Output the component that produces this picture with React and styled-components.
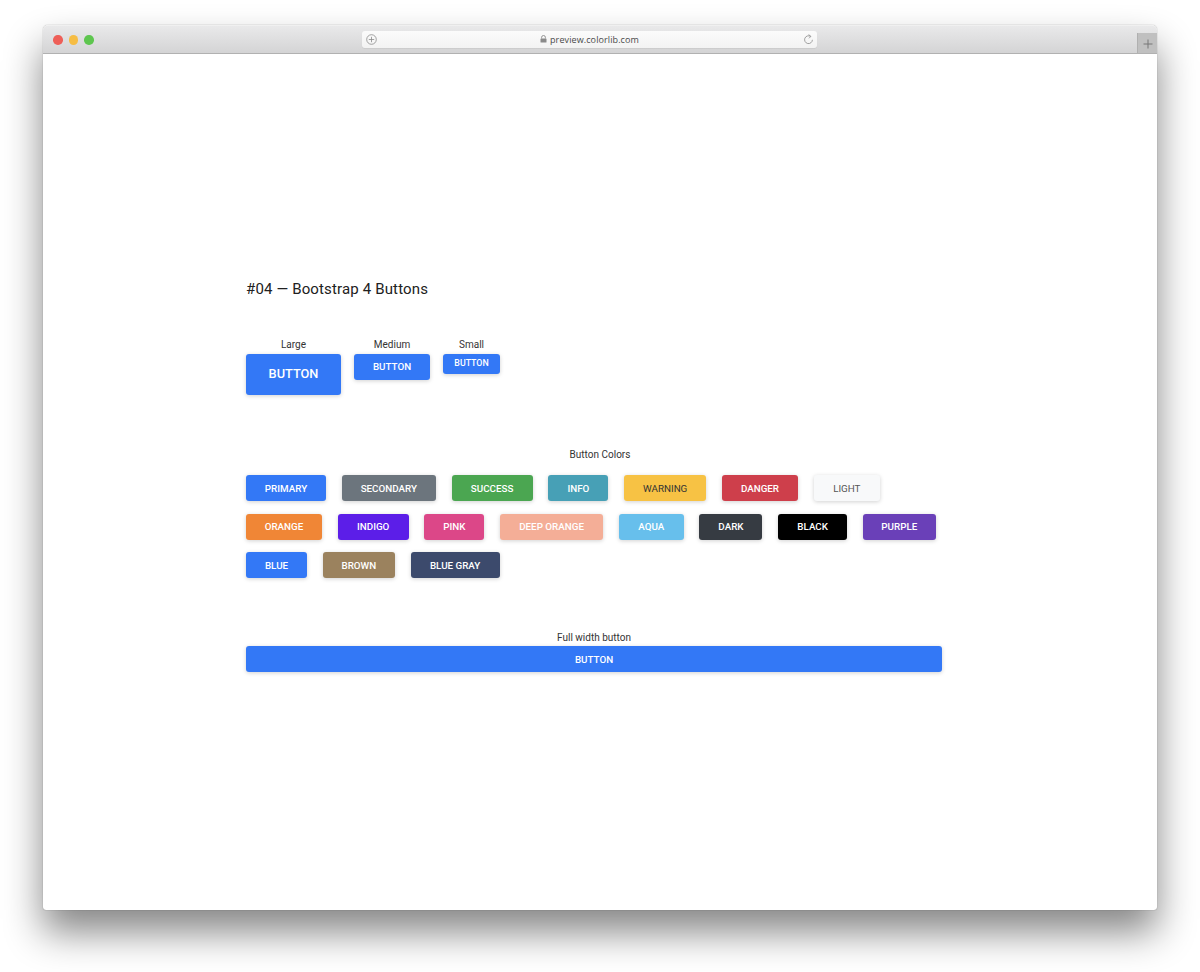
import React from 'react';
import styled, { createGlobalStyle } from 'styled-components';

const GlobalStyle = createGlobalStyle`
  html, body {
    margin: 0;
    padding: 0;
    height: 972px;
    overflow: hidden;
    background: #fff;
    font-family: Roboto, "Liberation Sans", sans-serif;
  }
`;

const Page = styled.div`
  padding: 25px 43px 0;
`;

const BrowserWindow = styled.div`
  height: 885px;
  display: flex;
  flex-direction: column;
  background: #fff;
  border-radius: 5px 5px 3px 3px;
  box-shadow: 0 22px 38px rgba(0, 0, 0, 0.48), 0 0 1px rgba(0, 0, 0, 0.5);
`;

const TitleBar = styled.div`
  position: relative;
  height: 29px;
  flex: none;
  display: flex;
  align-items: center;
  justify-content: center;
  box-sizing: border-box;
  background: linear-gradient(#e9e9ea, #d4d4d5);
  border-top: 1px solid #f0f0f0;
  border-bottom: 1px solid #b1b1b1;
  border-radius: 5px 5px 0 0;
`;

const Lights = styled.div`
  position: absolute;
  left: 10px;
  top: 9px;
  display: flex;
  gap: 6px;
`;

const Light = styled.span`
  width: 9.5px;
  height: 9.5px;
  border-radius: 50%;
  background: ${(p) => p.$color};
`;

const AddressBar = styled.div`
  position: relative;
  width: 455px;
  height: 17px;
  margin: -1px 21px 0 0;
  display: flex;
  align-items: center;
  justify-content: center;
  gap: 3px;
  background: linear-gradient(#fbfbfb, #f3f3f3);
  border-radius: 3px;
  font-family: "Open Sans", Roboto, sans-serif;
  font-size: 9px;
  letter-spacing: 0.1px;
  color: #4a4a4a;
  box-shadow: 0 1px 1px rgba(0, 0, 0, 0.06);
`;

const BarIcon = styled.svg`
  position: absolute;
  top: 3px;
  left: ${(p) => p.$left}px;
`;

const NewTab = styled.div`
  position: absolute;
  right: 0;
  bottom: 0;
  width: 20px;
  height: 20px;
  display: flex;
  align-items: center;
  justify-content: center;
  box-sizing: border-box;
  padding-top: 2px;
  background: #c0c0c0;
  border-left: 1px solid #b0b0b0;
`;

const Content = styled.div`
  flex: 1;
  width: 696px;
  margin-left: 203px;
  padding-top: 226px;
  color: #212529;
`;

const Heading = styled.h2`
  margin: 0 0 39px;
  font-size: 15px;
  line-height: 19px;
  font-weight: 400;
  letter-spacing: 0.15px;
  color: #212121;
`;

const SizeRow = styled.div`
  display: flex;
  align-items: flex-start;
  gap: 13px;
`;

const SizeGroup = styled.div`
  display: flex;
  flex-direction: column;
  align-items: center;
`;

const Label = styled.div`
  font-size: 10px;
  line-height: 13px;
  margin-bottom: 3px;
  text-align: center;
  color: #333;
`;

const Button = styled.button`
  display: block;
  box-sizing: border-box;
  height: ${(p) => p.$height || 26}px;
  width: ${(p) => (p.$full ? '100%' : `${p.$width}px`)};
  padding: 0;
  border: none;
  border-radius: 3px;
  background: ${(p) => p.$bg || '#3378f6'};
  color: ${(p) => p.$fg || '#fff'};
  font-family: Roboto, sans-serif;
  font-size: ${(p) => p.$size || 9.8}px;
  font-weight: ${(p) => p.$weight || 500};
  letter-spacing: 0;
  text-transform: uppercase;
  box-shadow: 0 1px 4px rgba(0, 0, 0, 0.18);
`;

const SizeButton = styled(Button)`
  padding-bottom: 2px;
`;

const ColorsTitle = styled(Label)`
  margin: 53px 0 14px;
  padding-left: 12px;
`;

const ColorRow = styled.div`
  display: flex;
  gap: ${(p) => p.$gap}px;
  margin-bottom: 12.5px;
`;

const FullLabel = styled(Label)`
  margin: 53px 0 2px;
`;

const rows = [
  {
    gap: 15.8,
    buttons: [
      ['Primary', '#3378f6', 80],
      ['Secondary', '#6c757d', 94],
      ['Success', '#4ba651', 81],
      ['Info', '#47a0b6', 60],
      ['Warning', '#f7c244', 82, '#333', 400],
      ['Danger', '#ce3f4b', 76],
      ['Light', '#f8f9fa', 66, '#555', 400],
    ],
  },
  {
    gap: 15.7,
    buttons: [
      ['Orange', '#f08636', 76],
      ['Indigo', '#5c1ee8', 71],
      ['Pink', '#dc4788', 60],
      ['Deep Orange', '#f4ae97', 103],
      ['Aqua', '#67bfec', 65],
      ['Dark', '#363b42', 63],
      ['Black', '#000', 69],
      ['Purple', '#6a40b8', 73],
    ],
  },
  {
    gap: 15.8,
    buttons: [
      ['Blue', '#3378f6', 61],
      ['Brown', '#9b825e', 72],
      ['Blue Gray', '#3c4a6c', 89],
    ],
  },
];

const App = () => {
  return (
    <Page>
      <GlobalStyle />
      <BrowserWindow>
        <TitleBar>
          <Lights>
            <Light $color="#ee5f58" />
            <Light $color="#f6bd44" />
            <Light $color="#5ec64f" />
          </Lights>
          <AddressBar>
            <BarIcon $left={4} width="11" height="11" viewBox="0 0 11 11" fill="none" stroke="#8a8a8a" strokeWidth="0.8">
              <circle cx="5.5" cy="5.5" r="4.8" />
              <path d="M5.5 2.8v5.4M2.8 5.5h5.4" />
            </BarIcon>
            <svg width="7" height="8" viewBox="0 0 7 8">
              <path d="M1.6 3.5V2.4a1.9 1.9 0 0 1 3.8 0v1.1" fill="none" stroke="#8a8a8a" strokeWidth="0.9" />
              <rect x="0.5" y="3.4" width="6" height="4.2" rx="0.6" fill="#8a8a8a" />
            </svg>
            preview.colorlib.com
            <BarIcon $left={441} width="11" height="11" viewBox="0 0 11 11" fill="none" stroke="#8a8a8a" strokeWidth="0.8">
              <path d="M7.6 2.4A3.9 3.9 0 1 0 9.4 5.8" />
              <path d="M5.6 0.6L7.9 2.4L6 4.3" />
            </BarIcon>
          </AddressBar>
          <NewTab>
            <svg width="10" height="10" viewBox="0 0 10 10" stroke="#777" strokeWidth="1">
              <path d="M5 0.5v9M0.5 5h9" />
            </svg>
          </NewTab>
        </TitleBar>
        <Content>
          <Heading>#04 — Bootstrap 4 Buttons</Heading>
          <SizeRow>
            <SizeGroup>
              <Label>Large</Label>
              <SizeButton $width={95} $height={41} $size={12.8}>Button</SizeButton>
            </SizeGroup>
            <SizeGroup>
              <Label>Medium</Label>
              <SizeButton $width={76} $height={26}>Button</SizeButton>
            </SizeGroup>
            <SizeGroup>
              <Label>Small</Label>
              <SizeButton $width={57} $height={20} $size={8.8}>Button</SizeButton>
            </SizeGroup>
          </SizeRow>
          <ColorsTitle>Button Colors</ColorsTitle>
          {rows.map((row, i) => (
            <ColorRow key={i} $gap={row.gap}>
              {row.buttons.map(([name, bg, width, fg, weight]) => (
                <Button key={name} $bg={bg} $width={width} $fg={fg} $weight={weight}>
                  {name}
                </Button>
              ))}
            </ColorRow>
          ))}
          <FullLabel>Full width button</FullLabel>
          <Button $full>Button</Button>
        </Content>
      </BrowserWindow>
    </Page>
  );
};

export default App;
